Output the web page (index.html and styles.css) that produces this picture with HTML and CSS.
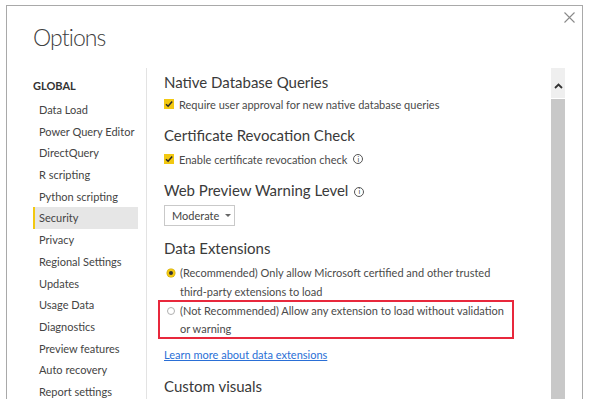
FILE: index.html
```html
<!DOCTYPE html>
<html lang="en">
<head>
<meta charset="utf-8">
<title>Options</title>
<link rel="stylesheet" href="styles.css">
</head>
<body>
<div class="dialog">
  <div class="header">
    <h1 class="title">Options</h1>
    <svg class="close" width="11" height="11" viewBox="0 0 11 11"><path d="M0.5 0.5 L10.5 10.5 M10.5 0.5 L0.5 10.5" stroke="#8a8a8a" stroke-width="1.1" fill="none"/></svg>
  </div>
  <div class="main">
    <nav class="nav">
      <div class="nav-group">GLOBAL</div>
      <div class="nav-item">Data Load</div>
      <div class="nav-item">Power Query Editor</div>
      <div class="nav-item">DirectQuery</div>
      <div class="nav-item">R scripting</div>
      <div class="nav-item">Python scripting</div>
      <div class="nav-item active">Security</div>
      <div class="nav-item">Privacy</div>
      <div class="nav-item">Regional Settings</div>
      <div class="nav-item">Updates</div>
      <div class="nav-item">Usage Data</div>
      <div class="nav-item">Diagnostics</div>
      <div class="nav-item">Preview features</div>
      <div class="nav-item">Auto recovery</div>
      <div class="nav-item">Report settings</div>
    </nav>
    <section class="content">
      <h2 class="sec first">Native Database Queries</h2>
      <div class="check-row">
        <span class="cb"><svg width="10" height="10" viewBox="0 0 10 10"><path d="M2 5.2 L4.1 7.2 L8.2 2.6" stroke="#2b2b2b" stroke-width="1.5" fill="none"/></svg></span>
        <span>Require user approval for new native database queries</span>
      </div>
      <h2 class="sec">Certificate Revocation Check</h2>
      <div class="check-row c2">
        <span class="cb"><svg width="10" height="10" viewBox="0 0 10 10"><path d="M2 5.2 L4.1 7.2 L8.2 2.6" stroke="#2b2b2b" stroke-width="1.5" fill="none"/></svg></span>
        <span>Enable certificate revocation check</span>
        <span class="info">i</span>
      </div>
      <h2 class="sec">Web Preview Warning Level <span class="info big">i</span></h2>
      <div class="dropdown">Moderate <span class="caret"></span></div>
      <h2 class="sec">Data Extensions</h2>
      <div class="radio-row">
        <span class="radio on"></span>
        <span class="rtext">(Recommended) Only allow Microsoft certified and other trusted<br>third-party extensions to load</span>
      </div>
      <div class="highlight">
        <div class="radio-row inbox">
          <span class="radio"></span>
          <span class="rtext">(Not Recommended) Allow any extension to load without validation<br>or warning</span>
        </div>
      </div>
      <a class="link" href="#">Learn more about data extensions</a>
      <h2 class="sec">Custom visuals</h2>
    </section>
    <div class="scrollbar">
      <div class="sb-up"><svg width="9" height="6" viewBox="0 0 9 6"><path d="M1 5 L4.5 1.5 L8 5" stroke="#333" stroke-width="1.8" fill="none"/></svg></div>
      <div class="sb-thumb"></div>
    </div>
  </div>
</div>
</body>
</html>
```

FILE: styles.css
```css
html, body {
  margin: 0;
  padding: 0;
  background: #fff;
}
body {
  font-family: Lato, "Open Sans", sans-serif;
  color: #444;
  width: 589px;
  height: 411px;
  overflow: hidden;
}
.dialog {
  margin: 5px 0 0 6px;
  width: 575px;
  height: 393px;
  border: 1px solid #a9a9a9;
  border-bottom: none;
  display: flex;
  flex-direction: column;
  overflow: hidden;
}
.header {
  height: 62px;
  position: relative;
}
.title {
  margin: 0;
  padding: 15px 0 0 26px;
  font-weight: 300;
  font-size: 23px;
  line-height: 32px;
  letter-spacing: -0.9px;
  color: #404040;
}
.close {
  position: absolute;
  top: 6px;
  right: 7px;
}
.main {
  flex: 1;
  display: flex;
  min-height: 0;
}
.nav {
  width: 139px;
  padding-top: 7px;
  font-size: 11px;
  color: #444;
}
.nav-group {
  padding-left: 26px;
  font-weight: 700;
  font-size: 11px;
  line-height: 22px;
  color: #333;
  margin-bottom: 2px;
}
.nav-item {
  margin-left: 26px;
  padding-left: 4px;
  width: 99px;
  line-height: 21.7px;
  height: 21.7px;
  white-space: nowrap;
  border-left: 2px solid transparent;
}
.nav-item.active {
  background: #e6e6e6;
  border-left-color: #f2c811;
}
.content {
  flex: 1;
  border-left: 1px solid #e3e3e3;
  padding-left: 17px;
  overflow: hidden;
  font-size: 11px;
  color: #4a4a4a;
}
.sec {
  margin: 11px 0 0;
  font-weight: 400;
  font-size: 15px;
  line-height: 22px;
  color: #3a3a3a;
  white-space: nowrap;
}
.sec.first {
  margin-top: 3px;
}
.check-row {
  display: flex;
  align-items: center;
  gap: 5px;
  height: 18px;
  margin-top: 2px;
  white-space: nowrap;
}
.check-row.c2 {
  margin-top: 4px;
}
.cb {
  width: 10px;
  height: 10px;
  background: #f2c811;
  display: inline-flex;
  flex: none;
}
.info {
  display: inline-flex;
  align-items: center;
  justify-content: center;
  border: 1px solid #555;
  border-radius: 50%;
  font-size: 7px;
  line-height: 1;
  color: #444;
  margin-left: 1px;
  box-sizing: border-box;
  width: 10px;
  height: 10px;
}
.info.big {
  vertical-align: 2px;
  margin-left: 2px;
}
.dropdown {
  margin-top: 4px;
  width: 71px;
  height: 21px;
  box-sizing: border-box;
  border: 1px solid #c9c9c9;
  display: flex;
  align-items: center;
  padding-left: 7px;
  gap: 6px;
  font-size: 11px;
  color: #444;
}
.caret {
  width: 0;
  height: 0;
  border-left: 3px solid transparent;
  border-right: 3px solid transparent;
  border-top: 3px solid #666;
}
.radio-row {
  display: flex;
  gap: 5px;
  margin-top: 4px;
  line-height: 19px;
  white-space: nowrap;
}
.radio {
  flex: none;
  width: 8px;
  height: 8px;
  margin-top: 5.5px;
  margin-left: 3px;
  border-radius: 50%;
  border: 1px solid #b0b0b0;
  box-sizing: border-box;
}
.radio.on {
  border: 2px solid #f2c811;
  background: #333;
  box-shadow: 0 0 0 0.5px #c9a500;
}
.rtext {
  flex: 1;
}
.highlight {
  margin-left: -6px;
  width: 356px;
  height: 39px;
  box-sizing: border-box;
  border: 2px solid #e8283c;
  margin-top: -1px;
  padding-left: 4px;
}
.highlight .radio-row {
  margin-top: 0;
  line-height: 18px;
}
.highlight .radio {
  margin-top: 5px;
}
.link {
  display: block;
  margin-top: 7px;
  line-height: 18px;
  color: #2a6fd6;
  text-decoration: underline;
  white-space: nowrap;
}
.scrollbar {
  width: 14px;
  margin-right: 17px;
  display: flex;
  flex-direction: column;
}
.sb-up {
  height: 30px;
  background: #efefef;
  display: flex;
  justify-content: center;
  align-items: center;
  padding-top: 6px;
  box-sizing: border-box;
}
.sb-thumb {
  flex: 1;
  background: #c8c8c8;
  margin-top: 1px;
}
```
